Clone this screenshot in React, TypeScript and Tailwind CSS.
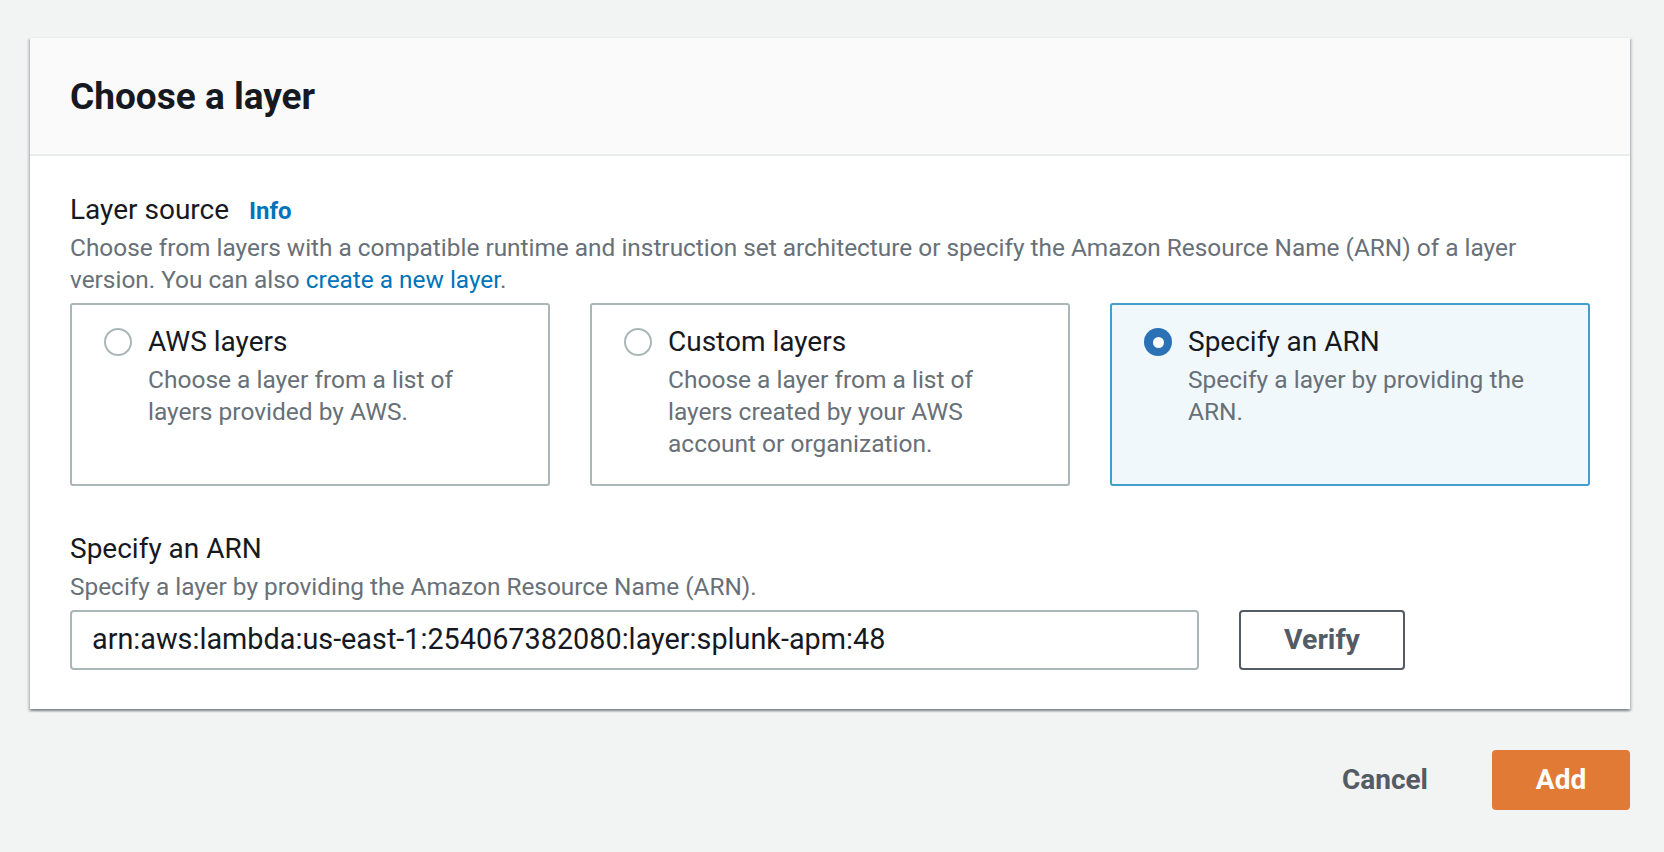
import React from "react"

type Tile = {
  title: string
  lines: string[]
  selected?: boolean
}

const TILES: Tile[] = [
  { title: "AWS layers", lines: ["Choose a layer from a list of", "layers provided by AWS."] },
  {
    title: "Custom layers",
    lines: ["Choose a layer from a list of", "layers created by your AWS", "account or organization."],
  },
  { title: "Specify an ARN", lines: ["Specify a layer by providing the", "ARN."], selected: true },
]

function Radio({ checked }: { checked?: boolean }) {
  if (checked) {
    return (
      <span className="w-[28px] h-[28px] rounded-full bg-[#2a71b6] flex items-center justify-center">
        <span className="w-[11px] h-[11px] rounded-full bg-white" />
      </span>
    )
  }
  return <span className="w-[28px] h-[28px] rounded-full border-2 border-[#aab7b8] bg-white" />
}

function LayerTile({ tile }: { tile: Tile }) {
  return (
    <div
      className={
        tile.selected
          ? "border-2 border-[#40a0cb] bg-[#f1f8fc] rounded-[3px] pt-[15px] pb-[24px] px-[32px] flex"
          : "border-2 border-[#aab7b8] bg-white rounded-[3px] pt-[15px] pb-[24px] px-[32px] flex"
      }
    >
      <div className="h-[44px] flex items-center shrink-0">
        <Radio checked={tile.selected} />
      </div>
      <div className="ml-[16px]">
        <div className="text-[28px] leading-[44px] text-[#16191f]">{tile.title}</div>
        <div className="text-[24.5px] leading-[32px] text-[#687078]">
          {tile.lines.map((l) => (
            <div key={l}>{l}</div>
          ))}
        </div>
      </div>
    </div>
  )
}

export default function App() {
  return (
    <div className="min-h-screen bg-[#f2f3f3] font-[Roboto,sans-serif] text-[#16191f]">
      <div className="w-[1600px] ml-[30px] pt-[37px]">
        {/* container */}
        <div className="bg-white border-t border-[#eaeded] shadow-[0_2px_2px_0_rgba(0,28,36,0.3),2px_2px_2px_0_rgba(0,28,36,0.15),-2px_2px_2px_0_rgba(0,28,36,0.15)]">
          <div className="h-[118px] pt-[2px] bg-[#fafafa] border-b-2 border-[#eaeded] flex items-center px-[40px]">
            <h2 className="text-[37px] leading-[44px] font-bold">Choose a layer</h2>
          </div>

          <div className="px-[40px] pt-[32px] pb-[39px]">
            <div className="flex items-baseline">
              <span className="text-[28px] leading-[44px]">Layer source</span>
              <a className="ml-[20px] text-[24px] font-bold text-[#0073bb]">Info</a>
            </div>
            <p className="text-[24.4px] leading-[32px] text-[#687078]">
              Choose from layers with a compatible runtime and instruction set architecture or specify the
              Amazon Resource Name (ARN) of a layer
              <br />
              version. You can also <a className="text-[#0073bb]">create a new layer</a>.
            </p>

            <div className="grid grid-cols-3 gap-[40px] mt-[7px]">
              {TILES.map((t) => (
                <LayerTile key={t.title} tile={t} />
              ))}
            </div>

            <div className="mt-[41px] text-[28px] leading-[44px]">Specify an ARN</div>
            <p className="text-[24.4px] leading-[32px] text-[#687078]">
              Specify a layer by providing the Amazon Resource Name (ARN).
            </p>

            <div className="flex items-center gap-[40px] mt-[7px]">
              <div className="w-[1129px] h-[60px] border-2 border-[#aab7b8] rounded-[4px] bg-white flex items-center px-[20px] text-[28.8px]">
                arn:aws:lambda:us-east-1:254067382080:layer:splunk-apm:48
              </div>
              <button className="w-[166px] h-[60px] border-2 border-[#545b64] rounded-[4px] bg-white text-[28.5px] font-bold text-[#545b64]">
                Verify
              </button>
            </div>
          </div>
        </div>

        {/* footer actions */}
        <div className="flex justify-end items-center mt-[41px] gap-[24px]">
          <button className="px-[40px] h-[60px] text-[28px] font-bold text-[#545b64]">Cancel</button>
          <button className="w-[138px] h-[60px] rounded-[4px] bg-[#e07a35] text-white text-[28px] font-bold">
            Add
          </button>
        </div>
      </div>
    </div>
  )
}
